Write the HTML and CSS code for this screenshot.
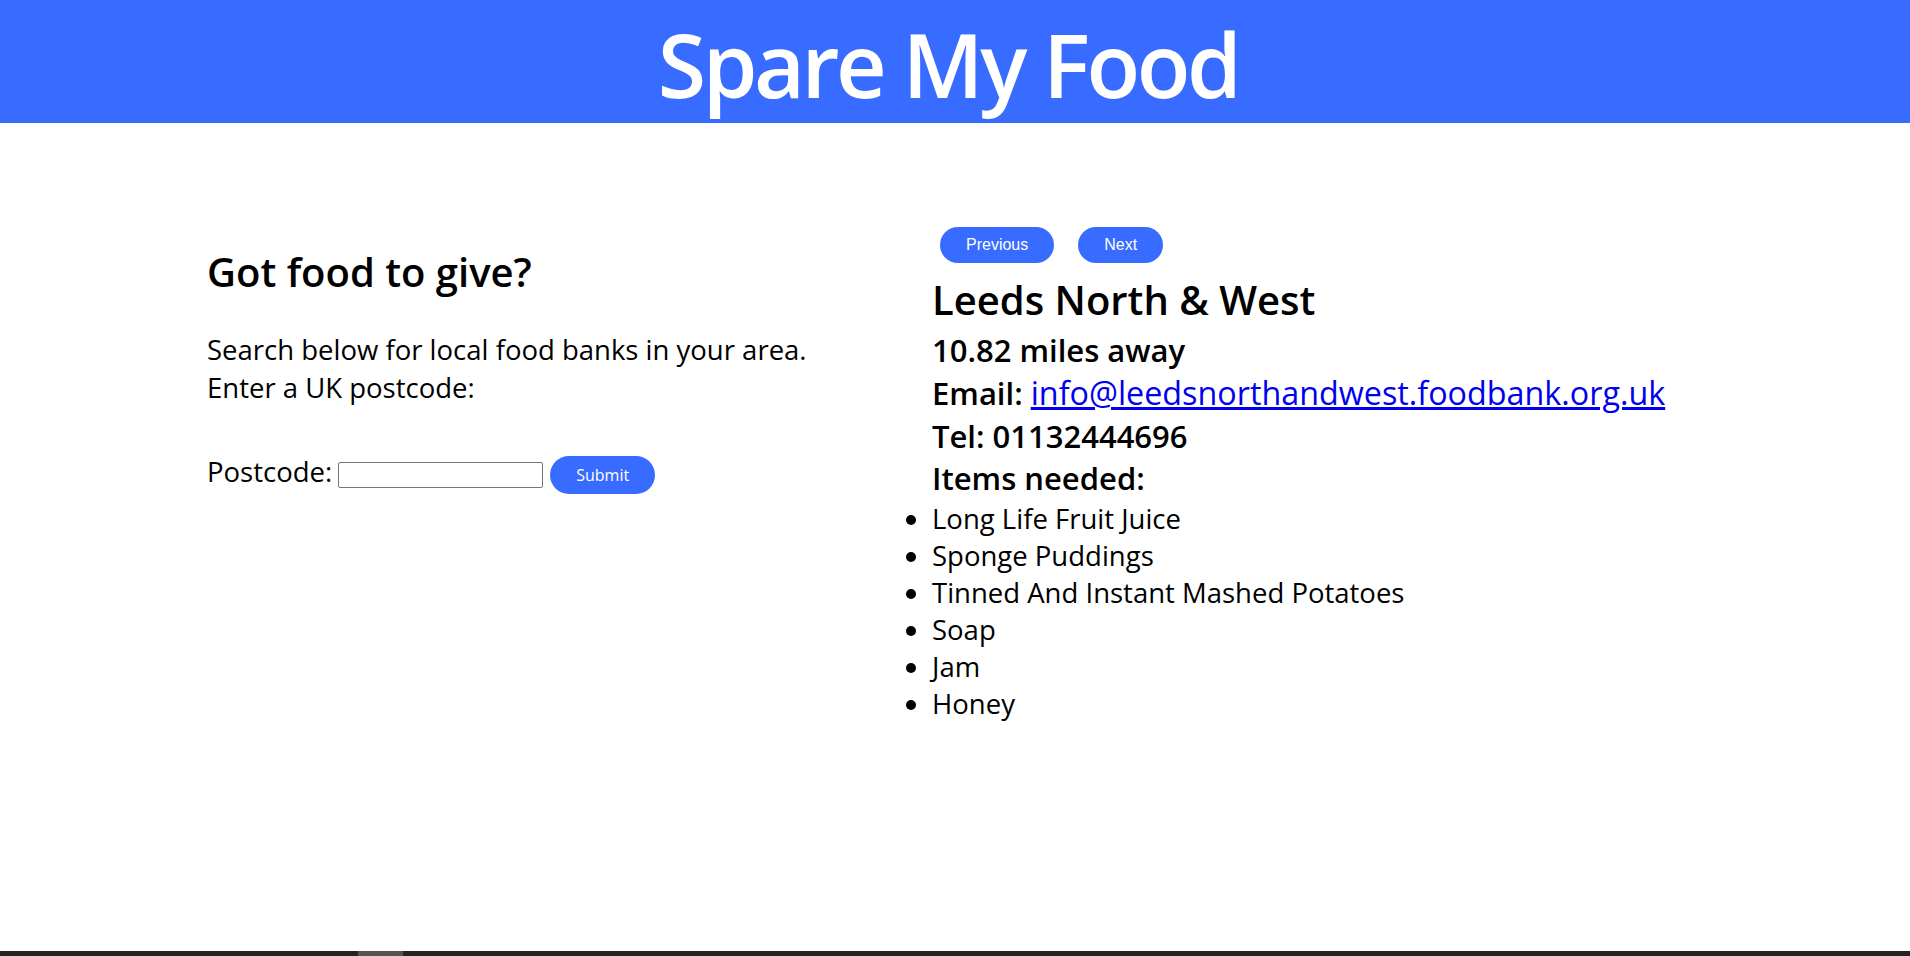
FILE: index.html
```html
<!DOCTYPE html>
<html lang="en">
<head>
<meta charset="utf-8">
<title>Spare My Food</title>
<link rel="stylesheet" href="styles.css">
</head>
<body>
<header class="site-header">
  <h1 class="site-title">Spare My Food</h1>
</header>
<main class="main">
  <section class="search">
    <h2 class="search-title">Got food to give?</h2>
    <p class="search-text">Search below for local food banks in your area.<br>Enter a UK postcode:</p>
    <form class="search-form">
      <label class="search-label" for="postcode">Postcode:</label>
      <input class="search-input" id="postcode" type="text">
      <button class="btn btn-submit" type="button">Submit</button>
    </form>
  </section>
  <section class="result">
    <div class="pager">
      <button class="btn btn-page" type="button">Previous</button>
      <button class="btn btn-page" type="button">Next</button>
    </div>
    <h2 class="bank-name">Leeds North &amp; West</h2>
    <p class="bank-line">10.82 miles away</p>
    <p class="bank-line">Email: <a class="bank-link" href="#">info@leedsnorthandwest.foodbank.org.uk</a></p>
    <p class="bank-line">Tel: 01132444696</p>
    <p class="bank-line">Items needed:</p>
    <ul class="items">
      <li>Long Life Fruit Juice</li>
      <li>Sponge Puddings</li>
      <li>Tinned And Instant Mashed Potatoes</li>
      <li>Soap</li>
      <li>Jam</li>
      <li>Honey</li>
    </ul>
  </section>
</main>
<div class="taskbar"><span class="taskbar-item"></span></div>
</body>
</html>
```
FILE: styles.css
```css
html, body {
  margin: 0;
  padding: 0;
  background: #ffffff;
}
body {
  font-family: "Open Sans", "Noto Sans", sans-serif;
  color: #000000;
  height: 956px;
  overflow: hidden;
}
.site-header {
  background: #386bff;
  height: 123px;
  display: flex;
  justify-content: center;
  align-items: center;
}
.site-title {
  margin: 0 14px 0 0;
  color: #ffffff;
  font-size: 88px;
  font-weight: 600;
  line-height: 1;
  letter-spacing: -3.5px;
  transform: translateY(2px);
}
.main {
  display: flex;
  padding-top: 104px;
  padding-left: 207px;
}
.search {
  width: 725px;
  flex: none;
  margin-top: 18px;
}
.search-title {
  margin: 0;
  font-size: 40px;
  font-weight: 600;
  line-height: 54px;
}
.search-text {
  margin: 32px 0 0;
  font-size: 27.5px;
  line-height: 38px;
}
.search-form {
  display: flex;
  align-items: center;
  margin-top: 49px;
  height: 38px;
}
.search-label {
  font-size: 27.5px;
  line-height: 37px;
  padding-bottom: 7px;
  margin-right: 5px;
}
.search-input {
  box-sizing: border-box;
  width: 205px;
  height: 26px;
  border: 1px solid #767676;
  border-radius: 2px;
  margin: 0 7px 0 1px;
  padding: 1px 2px;
  font-size: 13px;
}
.btn {
  border: none;
  background: #386bff;
  color: #ffffff;
  cursor: pointer;
}
.btn-submit {
  height: 38px;
  padding: 0 26px;
  border-radius: 19px;
  font-family: "Open Sans", sans-serif;
  font-size: 16px;
}
.result {
  flex: 1;
}
.pager {
  display: flex;
  gap: 24px;
  margin-left: 8px;
  height: 36px;
}
.btn-page {
  height: 36px;
  padding: 0 26px;
  border-radius: 18px;
  font-family: "Liberation Sans", Arial, sans-serif;
  font-size: 16px;
}
.bank-name {
  margin: 10px 0 2px;
  font-size: 40px;
  font-weight: 600;
  line-height: 54px;
}
.bank-line {
  margin: 0;
  font-size: 31px;
  font-weight: 600;
  line-height: 42.8px;
}
.bank-link {
  color: #0000ee;
  font-size: 32.3px;
  font-weight: 400;
  line-height: 1;
}
.items {
  margin: 0;
  padding: 0;
  list-style: disc outside;
  font-size: 27.5px;
  line-height: 37px;
}
.taskbar {
  position: fixed;
  left: 0;
  right: 0;
  bottom: 0;
  height: 5px;
  background: #262320;
}
.taskbar-item {
  position: absolute;
  left: 358px;
  top: 0;
  width: 45px;
  height: 5px;
  background: #575350;
}
```
